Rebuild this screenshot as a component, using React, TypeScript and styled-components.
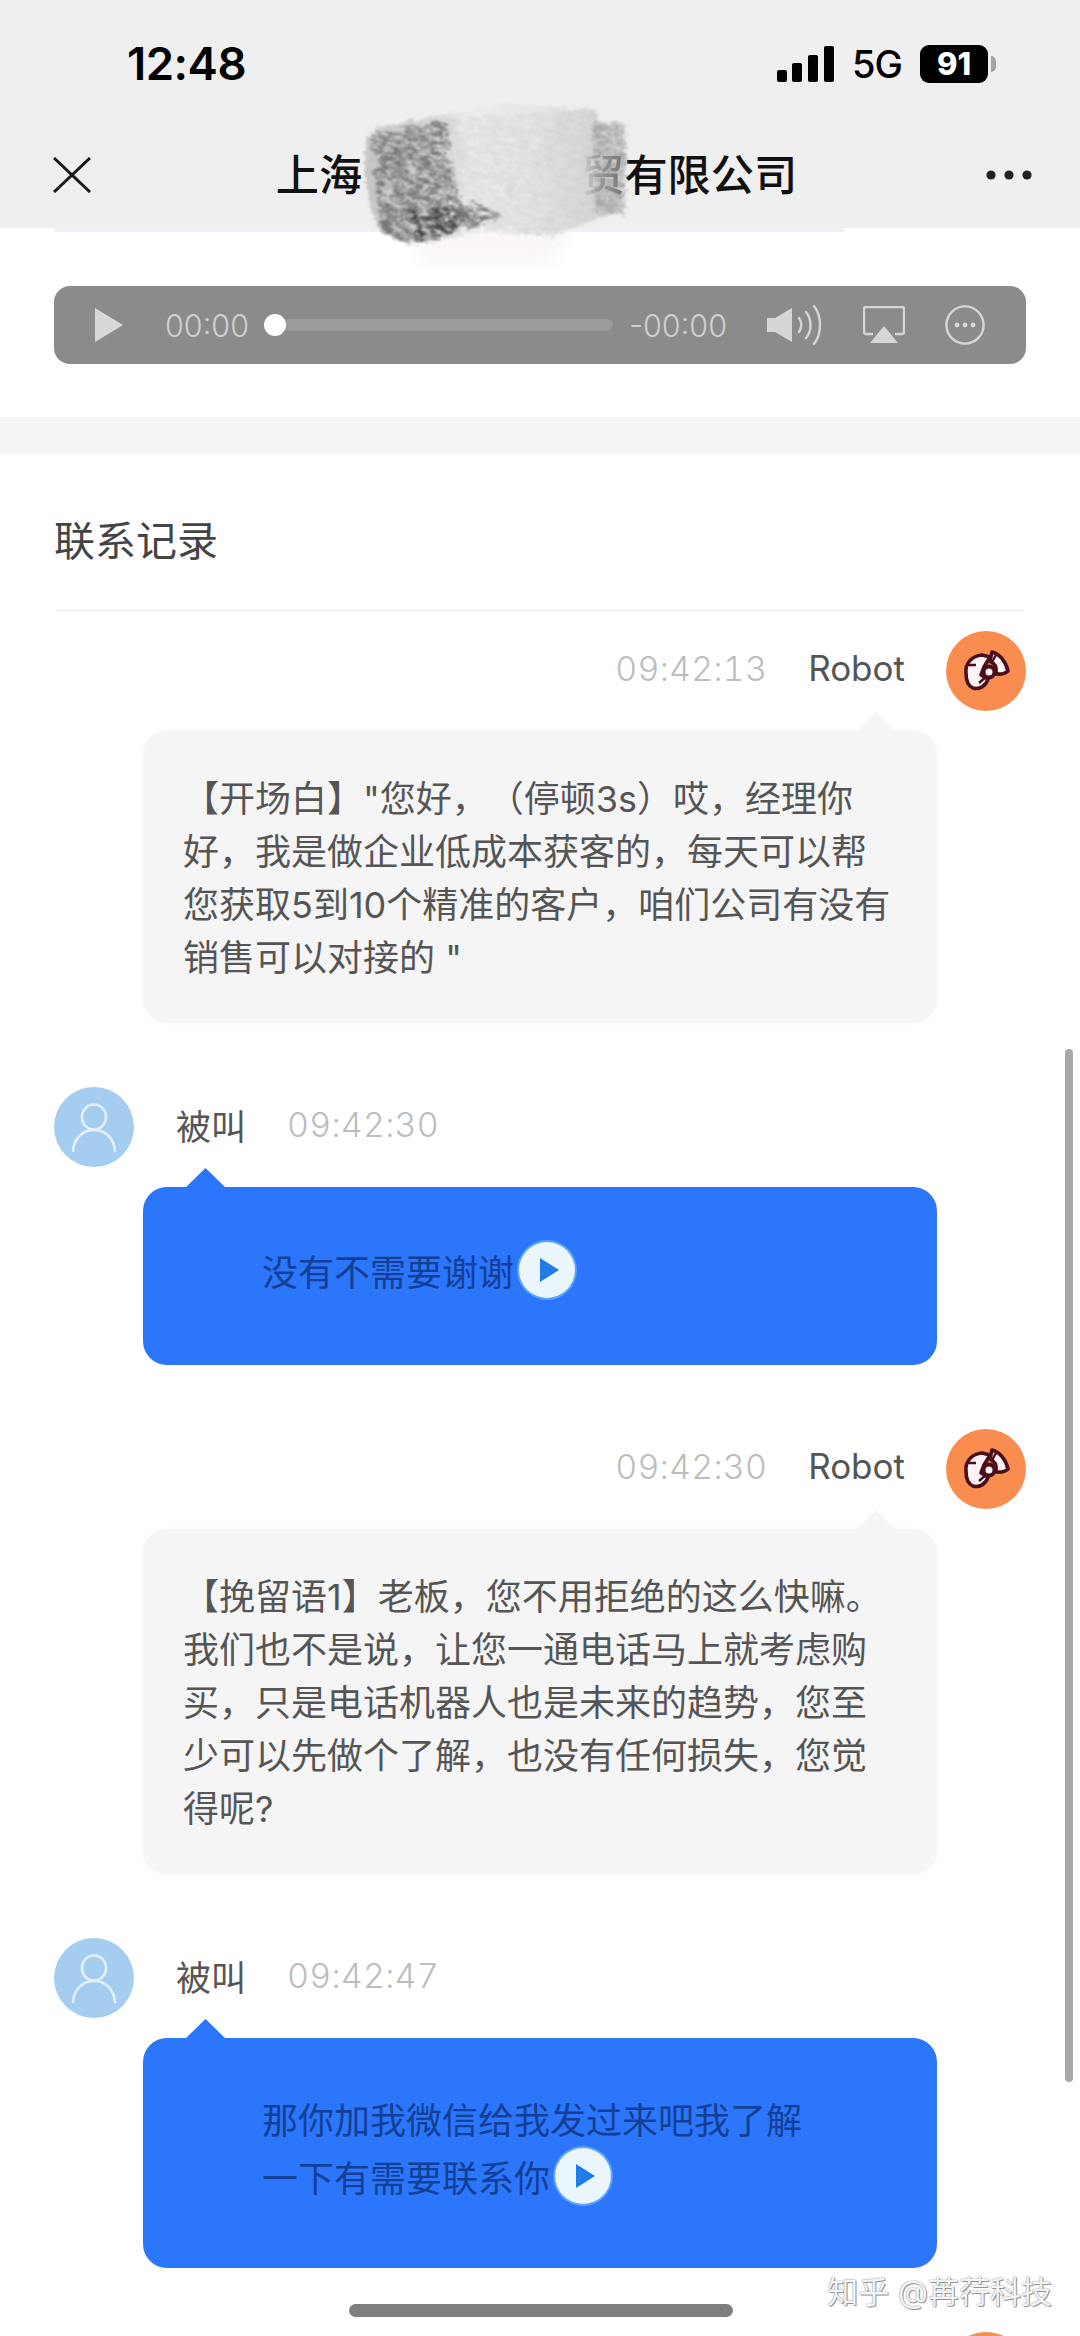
import styled, { createGlobalStyle } from "styled-components";

const FONT = `"Inter", "Noto Sans CJK SC", "Noto Sans", sans-serif`;

const GlobalStyle = createGlobalStyle`
  * { box-sizing: border-box; }
  html, body { margin: 0; padding: 0; background: #fff; }
  body { font-family: ${FONT}; }
`;

type Message = {
  from: "robot" | "callee";
  time: string;
  lines: string[];
};

const messages: Message[] = [
  {
    from: "robot",
    time: "09:42:13",
    lines: [
      '【开场白】"您好，（停顿3s）哎，经理你',
      "好，我是做企业低成本获客的，每天可以帮",
      "您获取5到10个精准的客户，咱们公司有没有",
      '销售可以对接的 "',
    ],
  },
  { from: "callee", time: "09:42:30", lines: ["没有不需要谢谢"] },
  {
    from: "robot",
    time: "09:42:30",
    lines: [
      "【挽留语1】老板，您不用拒绝的这么快嘛。",
      "我们也不是说，让您一通电话马上就考虑购",
      "买，只是电话机器人也是未来的趋势，您至",
      "少可以先做个了解，也没有任何损失，您觉",
      "得呢?",
    ],
  },
  {
    from: "callee",
    time: "09:42:47",
    lines: ["那你加我微信给我发过来吧我了解", "一下有需要联系你"],
  },
];

const RobotAvatar = () => (
  <AvatarCircle $robot>
    <svg width="80" height="80" viewBox="0 0 80 80">
      <path
        d="M20 42C19 32 26 25 36 24l8 2-6 10-3 8 7 4c-2 7-9 11-15 9-5-2-7-7-7-15z"
        fill="#fdf3f6"
        stroke="#4a1019"
        strokeWidth="3.6"
        strokeLinejoin="round"
      />
      <path
        d="M46 21c8 2 14 10 16 19-4 4-9 3-12 3 1-7-1-11-6-13z"
        fill="#fdf3f6"
        stroke="#4a1019"
        strokeWidth="3.6"
        strokeLinejoin="round"
      />
      <path d="M21 34h9M33 52l8-7M50 24l-5 9" stroke="#4a1019" strokeWidth="2.4" />
      <circle cx="43" cy="41" r="5.5" fill="#fdf3f6" stroke="#4a1019" strokeWidth="4" />
    </svg>
  </AvatarCircle>
);

const CalleeAvatar = () => (
  <AvatarCircle>
    <svg width="80" height="80" viewBox="0 0 80 80" fill="none" stroke="#e4f1fb" strokeWidth="2.6">
      <ellipse cx="40" cy="30" rx="12" ry="12.5" />
      <path d="M19 64c1-13 10-21 21-21s20 8 21 21" strokeLinecap="round" />
    </svg>
  </AvatarCircle>
);

const PlayBadge = () => (
  <PlayCircle>
    <svg width="22" height="26" viewBox="0 0 22 26">
      <path d="M2 1l19 12L2 25z" fill="#1f7ce6" />
    </svg>
  </PlayCircle>
);

const SMUDGE_EDGE =
  "M18 35 49 27 149 8 239 15 242 27 270 27 267 118 242 122 195 142 129 137 52 150 25 138 14 112 9 78 9 52z";

const Smudge = () => (
  <SmudgeLayer width="290" height="190" viewBox="0 0 290 190">
    <defs>
      <filter id="rough" x="-10%" y="-10%" width="120%" height="120%">
        <feTurbulence type="fractalNoise" baseFrequency="0.14 0.3" numOctaves="3" seed="4" result="n" />
        <feDisplacementMap in="SourceGraphic" in2="n" scale="12" />
        <feGaussianBlur stdDeviation="1.2" />
      </filter>
      <filter id="speck" x="-10%" y="-10%" width="120%" height="120%">
        <feTurbulence type="fractalNoise" baseFrequency="0.08 0.42" numOctaves="4" seed="9" result="n" />
        <feColorMatrix in="n" type="matrix" values="0 0 0 0 0 0 0 0 0 0 0 0 0 0 0 5 0 0 0 -1.9" result="a" />
        <feComposite in="SourceGraphic" in2="a" operator="in" result="c" />
        <feDisplacementMap in="c" in2="n" scale="14" />
        <feGaussianBlur stdDeviation="0.8" />
      </filter>
      <filter id="soft">
        <feGaussianBlur stdDeviation="8" />
      </filter>
      <linearGradient id="wash" x1="0" x2="1" y1="0" y2="0">
        <stop offset="0" stopColor="#c4c4c4" stopOpacity="0.95" />
        <stop offset="0.28" stopColor="#d6d6d6" stopOpacity="0.97" />
        <stop offset="0.4" stopColor="#ececec" stopOpacity="0.98" />
        <stop offset="0.66" stopColor="#e6e6e6" stopOpacity="0.98" />
        <stop offset="0.84" stopColor="#d8d8d8" stopOpacity="0.92" />
        <stop offset="1" stopColor="#bcbcbc" stopOpacity="0.5" />
      </linearGradient>
    </defs>
    <path d="M50 130h170l-30 40H70z" fill="#faf6f9" filter="url(#soft)" />
    <path d={SMUDGE_EDGE} fill="url(#wash)" filter="url(#rough)" />
    <path d="M14 40 90 26 100 90 110 128 52 148 25 136z" fill="#5c5c5c" opacity="0.75" filter="url(#speck)" />
    <path d="M50 118l70-10 30 14-90 26z" fill="#3f3f3f" opacity="0.85" filter="url(#speck)" />
    <path d="M90 24 240 14 240 125 190 140 100 130z" fill="#bdbdbd" opacity="0.3" filter="url(#speck)" />
    <path d="M236 28h34v88l-30 6z" fill="#8a8a8a" opacity="0.6" filter="url(#speck)" />
  </SmudgeLayer>
);

export default function App() {
  return (
    <Page>
      <GlobalStyle />
      <TopBar>
        <StatusBar>
          <Clock>12:48</Clock>
          <StatusIcons>
            <svg width="57" height="36" viewBox="0 0 57 36" fill="#000">
              <rect x="0" y="24" width="10" height="12" rx="2" />
              <rect x="15" y="17" width="10" height="19" rx="2" />
              <rect x="31" y="9" width="10" height="27" rx="2" />
              <rect x="47" y="0" width="10" height="36" rx="2" />
            </svg>
            <Network>5G</Network>
            <Battery>91</Battery>
          </StatusIcons>
        </StatusBar>
        <NavBar>
          <svg width="38" height="36" viewBox="0 0 38 36" stroke="#1a1a1a" strokeWidth="3">
            <path d="M1 1l36 34M37 1L1 35" />
          </svg>
          <NavTitle>
            上海
            <Redacted>
              <Smudge />
            </Redacted>
            贸有限公司
          </NavTitle>
          <svg width="46" height="10" viewBox="0 0 46 10" fill="#222">
            <circle cx="5" cy="5" r="4.6" />
            <circle cx="23" cy="5" r="4.6" />
            <circle cx="41" cy="5" r="4.6" />
          </svg>
        </NavBar>
      </TopBar>

      <PlayerSection>
        <Hairline />
        <Player>
          <svg width="28" height="34" viewBox="0 0 28 34">
            <path d="M0 0l28 17L0 34z" fill="#d8d8d8" />
          </svg>
          <PlayerTime $elapsed>00:00</PlayerTime>
          <Track />
          <PlayerTime>-00:00</PlayerTime>
          <svg width="56" height="40" viewBox="0 0 56 40" fill="none" stroke="#d6d6d6" strokeWidth="2.4" strokeLinecap="round">
            <path d="M0 13h8L25 3v34L8 27H0z" fill="#d6d6d6" stroke="none" />
            <path d="M32 13c3 4 3 10 0 14M39 7c6 7 6 19 0 26M47 1c8 10 8 28 0 38" />
          </svg>
          <svg width="42" height="38" viewBox="0 0 42 38" fill="none" stroke="#d6d6d6" strokeWidth="2.4">
            <path d="M10 28H3a2 2 0 0 1-2-2V3a2 2 0 0 1 2-2h36a2 2 0 0 1 2 2v23a2 2 0 0 1-2 2h-7" />
            <path d="M21 20l14 17H7z" fill="#d6d6d6" stroke="none" />
          </svg>
          <svg width="40" height="40" viewBox="0 0 40 40" fill="none" stroke="#d6d6d6" strokeWidth="2.4">
            <circle cx="20" cy="20" r="18.6" />
            <g fill="#d6d6d6" stroke="none">
              <circle cx="12" cy="20" r="2.4" />
              <circle cx="20" cy="20" r="2.4" />
              <circle cx="28" cy="20" r="2.4" />
            </g>
          </svg>
        </Player>
      </PlayerSection>

      <SectionBand />

      <RecordHeader>联系记录</RecordHeader>

      <Thread>
        {messages.map((m, i) =>
          m.from === "robot" ? (
            <Entry key={i}>
              <MetaRow $robot>
                <MetaTime>{m.time}</MetaTime>
                <MetaName>Robot</MetaName>
                <RobotAvatar />
              </MetaRow>
              <GreyBubble>
                {m.lines.map((line) => (
                  <div key={line}>{line}</div>
                ))}
              </GreyBubble>
            </Entry>
          ) : (
            <Entry key={i}>
              <MetaRow>
                <CalleeAvatar />
                <MetaName>被叫</MetaName>
                <MetaTime>{m.time}</MetaTime>
              </MetaRow>
              <BlueBubble>
                {m.lines.map((line, n) => (
                  <BlueLine key={line}>
                    {line}
                    {n === m.lines.length - 1 && <PlayBadge />}
                  </BlueLine>
                ))}
              </BlueBubble>
            </Entry>
          )
        )}
        <Entry>
          <MetaRow $robot>
            <RobotAvatar />
          </MetaRow>
        </Entry>
      </Thread>

      <ScrollThumb />
      <Watermark>知乎 @苒荇科技</Watermark>
      <HomeBar />
    </Page>
  );
}

const Page = styled.div`
  position: relative;
  width: 1080px;
  height: 2336px;
  overflow: hidden;
  background: #fff;
  font-family: ${FONT};
  text-spacing-trim: space-all;
`;

const TopBar = styled.header`
  height: 228px;
  background: #efefef;
  color: #111;
`;

const StatusBar = styled.div`
  height: 128px;
  padding: 44px 92px 0 127px;
  display: flex;
  justify-content: space-between;
  align-items: flex-start;
`;

const Clock = styled.div`
  font-size: 45.5px;
  line-height: 40px;
  font-weight: 600;
  letter-spacing: -0.5px;
  color: #000;
`;

const StatusIcons = styled.div`
  display: flex;
  align-items: center;
  gap: 18px;
  height: 40px;
`;

const Network = styled.span`
  font-size: 38px;
  font-weight: 500;
  color: #000;
  letter-spacing: -1px;
`;

const Battery = styled.span`
  position: relative;
  width: 68px;
  height: 38px;
  border-radius: 9px;
  background: #000;
  color: #fff;
  font-size: 31px;
  font-weight: 800;
  line-height: 38px;
  text-align: center;
  &::after {
    content: "";
    position: absolute;
    right: -8px;
    top: 11px;
    width: 5px;
    height: 16px;
    border-radius: 0 5px 5px 0;
    background: #a5a5a5;
  }
`;

const NavBar = styled.nav`
  height: 100px;
  padding: 0 48px 6px 53px;
  display: flex;
  align-items: center;
  justify-content: space-between;
`;

const NavTitle = styled.h1`
  margin: 0 0 0 -4px;
  display: flex;
  align-items: center;
  font-size: 43.2px;
  font-weight: 500;
  line-height: 60px;
  color: #111;
  white-space: nowrap;
`;

const Redacted = styled.span`
  position: relative;
  display: inline-block;
  width: 219px;
  height: 60px;
`;

const SmudgeLayer = styled.svg`
  position: absolute;
  left: -6px;
  top: -50px;
  z-index: 2;
`;

const PlayerSection = styled.section`
  height: 189px;
  padding: 0 54px;
`;

const Hairline = styled.div`
  width: 790px;
  height: 4px;
  background: #edf2f8;
`;

const Player = styled.div`
  margin-top: 54px;
  height: 78px;
  border-radius: 16px;
  background: #8b8b8b;
  padding: 0 41px 0 41px;
  display: flex;
  align-items: center;
  gap: 40px;
`;

const PlayerTime = styled.span<{ $elapsed?: boolean }>`
  font-size: 30.5px;
  font-weight: 300;
  color: #cfcfcf;
  margin-right: ${(p) => (p.$elapsed ? "-14px" : "0")};
  margin-left: ${(p) => (p.$elapsed ? "2px" : "-24px")};
  white-space: nowrap;
`;

const Track = styled.div`
  position: relative;
  flex: 1;
  height: 12px;
  border-radius: 6px;
  background: #9b9b9b;
  &::before {
    content: "";
    position: absolute;
    left: -11px;
    top: -5px;
    width: 22px;
    height: 22px;
    border-radius: 50%;
    background: #fff;
  }
`;

const SectionBand = styled.div`
  height: 37px;
  background: #f5f5f5;
`;

const RecordHeader = styled.h2`
  margin: 0 55px;
  height: 157px;
  padding-top: 59px;
  font-size: 41px;
  font-weight: 400;
  line-height: 56px;
  color: #444;
  text-indent: -1px;
  border-bottom: 1px solid #ececec;
`;

const Thread = styled.div`
  padding: 20px 54px 0;
  display: flex;
  flex-direction: column;
  gap: 64px;
`;

const Entry = styled.article`
  display: flex;
  flex-direction: column;
  gap: 20px;
`;

const MetaRow = styled.div<{ $robot?: boolean }>`
  height: 80px;
  display: flex;
  align-items: center;
  justify-content: ${(p) => (p.$robot ? "flex-end" : "flex-start")};
`;

const AvatarCircle = styled.span<{ $robot?: boolean }>`
  width: 80px;
  height: 80px;
  flex: none;
  border-radius: 50%;
  background: ${(p) => (p.$robot ? "#f98d4f" : "#a4cdf0")};
  margin-left: ${(p) => (p.$robot ? "41px" : "0")};
  margin-right: ${(p) => (p.$robot ? "0" : "42px")};
`;

const MetaName = styled.span`
  font-size: 35px;
  color: #555;
  margin-bottom: 6px;
`;

const MetaTime = styled.span`
  font-size: 34px;
  font-weight: 300;
  color: #bdbdbd;
  letter-spacing: 0.2px;
  font-variant-numeric: tabular-nums;
  margin: 0 41px 6px;
`;

const Bubble = styled.div`
  position: relative;
  width: 794px;
  margin-left: 89px;
  border-radius: 24px;
  white-space: nowrap;
`;

const GreyBubble = styled(Bubble)`
  background: #f5f5f5;
  box-shadow: 0 0 4px #f4f4f4;
  padding: 42px 0 38px 40px;
  font-size: 36px;
  line-height: 53px;
  color: #555;
  &::before {
    content: "";
    position: absolute;
    right: 41px;
    top: -19px;
    width: 40px;
    height: 20px;
    background: #f5f5f5;
    clip-path: polygon(50% 0, 100% 100%, 0 100%);
  }
`;

const BlueBubble = styled(Bubble)`
  background: #2b76fa;
  min-height: 178px;
  padding: 51px 0 63px 119px;
  display: flex;
  flex-direction: column;
  justify-content: center;
  font-size: 36px;
  color: #143f96;
  &::before {
    content: "";
    position: absolute;
    left: 42px;
    top: -19px;
    width: 41px;
    height: 20px;
    background: #2b76fa;
    clip-path: polygon(50% 0, 100% 100%, 0 100%);
  }
`;

const BlueLine = styled.div`
  display: flex;
  align-items: center;
  height: 58px;
`;

const PlayCircle = styled.span`
  display: inline-flex;
  align-items: center;
  justify-content: center;
  width: 56px;
  height: 56px;
  margin-left: 5px;
  padding-left: 4px;
  border-radius: 50%;
  background: #eaf6fc;
  box-shadow: 0 0 0 2px rgba(120, 190, 250, 0.6);
`;

const ScrollThumb = styled.div`
  position: absolute;
  right: 7px;
  top: 1049px;
  width: 8px;
  height: 1033px;
  border-radius: 4px;
  background: #a9a9a9;
`;

const Watermark = styled.div`
  position: absolute;
  right: 28px;
  top: 2270px;
  font-size: 31px;
  line-height: 44px;
  color: #f4f4f4;
  text-shadow: 0 0 1.5px #6f6f6f, 1px 1px 0 #a0a0a0;
  white-space: nowrap;
`;

const HomeBar = styled.div`
  position: absolute;
  left: 349px;
  top: 2304px;
  width: 384px;
  height: 13px;
  border-radius: 7px;
  background: #7f7f7f;
`;
